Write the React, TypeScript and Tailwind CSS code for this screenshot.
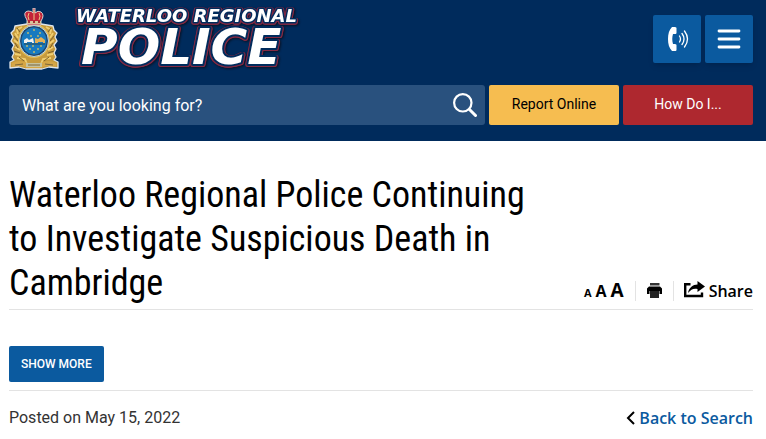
import type { ReactNode } from "react";

const IconButton = ({ label, children }: { label: string; children: ReactNode }) => (
  <button
    type="button"
    aria-label={label}
    className="flex h-12 w-12 items-center justify-center rounded-[2px] bg-[#0b5a9f] text-white shadow-md"
  >
    {children}
  </button>
);

const Crest = () => (
  <svg viewBox="0 0 50 62" className="h-[62px] w-[50px] shrink-0" aria-hidden="true">
    {/* Laurel and scroll */}
    <path
      d="M18 16 12 17 6 18 5 22 2 25 4 29 2 33 5 37 3 41 5 45 3 49 5 52 1 54 1 60 10 59 17 61 33 61 40 59 49 60 49 54 45 52 47 49 45 45 47 41 45 37 48 33 46 29 48 25 45 22 44 18 38 17 32 16Z"
      fill="#c79b3d"
      stroke="#dfe5e9"
      strokeWidth="1.3"
      strokeLinejoin="round"
    />
    <path
      d="M13 19 8 22 9 26M6 25 9 30M5 32 10 36M6 39 11 42M6 46 12 47M8 50 16 51 18 56M37 19 42 22 41 26M44 25 41 30M45 32 40 36M44 39 39 42M44 46 38 47M42 50 34 51 32 56"
      fill="none"
      stroke="#f0cf72"
      strokeWidth="1.8"
    />
    <path
      d="M8 20 11 24M5 28 9 33M6 35 9 40M5 43 11 45M10 49 15 53M42 20 39 24M45 28 41 33M44 35 41 40M45 43 39 45M40 49 35 53"
      fill="none"
      stroke="#7d622d"
      strokeWidth="1"
    />
    <path d="M3 55Q11 51 18 55L32 55Q39 51 47 55L47 59Q39 56 32 60L18 60Q11 56 3 59Z" fill="#d5a646" />
    <path d="M17 55H33V59H17Z" fill="#c6c3a0" />
    <path d="M19 57H31M6 57 14 56M36 56 44 57" stroke="#7b653a" strokeWidth="1" />
    {/* Shield */}
    <ellipse cx="25" cy="33" rx="16" ry="17" fill="#e5bd58" />
    <ellipse cx="25" cy="33" rx="14.5" ry="15.5" fill="#22466c" stroke="#b9d4e2" strokeWidth="1" />
    <ellipse cx="25" cy="33" rx="12.5" ry="13.5" fill="#187ac0" />
    <path
      d="M18 25h2M24 22h2M30 25h2M21 28h2M28 28h2M17 38h2M23 38h2M31 38h2M20 41h2M28 41h2M24 44h2"
      stroke="#b9b96f"
      strokeWidth="1.5"
    />
    <path d="M15 32 18 30 20 32 24 30 25 35H23V34H18V35H15Z" fill="#f1f0ed" />
    <path d="M26 30 29 31 32 29 36 32V35H34V34H29V35H26Z" fill="#e0b058" />
    <path d="M15 36H36" stroke="#284b55" strokeWidth="1" />
    {/* Crown */}
    <path
      d="M18 12Q13 4 19 3Q23 3 24 5L24 0H26V5Q29 2 32 4Q36 7 32 13L32 17H18Z"
      fill="#c32339"
      stroke="#d8d3cf"
    />
    <path d="M20 5Q18 8 20 12M30 5Q32 8 30 12M25 2V12" fill="none" stroke="#edc985" strokeWidth="1" />
    <path d="M18 13H32V16H18Z" fill="#d8c49c" />
    <path d="M19 14H21M24 14H26M29 14H31" stroke="#a33134" strokeWidth="2" />
  </svg>
);

const Logo = () => (
  <a href="#" aria-label="Waterloo Regional Police" className="flex items-start">
    <Crest />
    {/* White face, navy stroke, red edge and a dark shadow */}
    <svg
      viewBox="0 0 270 66"
      className="h-[66px] w-[270px] overflow-visible [filter:drop-shadow(1px_0_0_#842943)_drop-shadow(-1px_0_0_#842943)_drop-shadow(0_1px_0_#842943)_drop-shadow(1px_1px_1px_#071225)]"
      fontFamily="'DejaVu Sans', sans-serif"
      fontWeight="bold"
      fontStyle="italic"
      fill="#fff"
      stroke="#002b5c"
      strokeLinejoin="round"
      paintOrder="stroke"
    >
      <text x="17" y="14" fontSize="18" strokeWidth="3">WATERLOO REGIONAL</text>
      <text x="22" y="56" fontSize="50" strokeWidth="4">POLICE</text>
    </svg>
  </a>
);

const SiteHeader = () => (
  <header className="bg-[#002b5c] pt-2 pr-[13px] pb-4 pl-[9px]">
    <div className="flex items-start justify-between">
      <Logo />
      <div className="flex gap-1 pt-[7px]">
        <IconButton label="Contact us">
          <svg viewBox="0 0 24 24" className="h-6 w-6" fill="none" stroke="currentColor">
            <path
              d="M10 0H7C4 3 3 7 3 12s1 9 4 12h3c1 0 1.500-.5 1.500-1v-5s-.5-1-1.500-1H8C7 14 7 10 8 7h2c1 0 1.500-.5 1.500-1V1S11 0 10 0Z"
              fill="currentColor"
              stroke="none"
            />
            <path d="M14.500 9q2 3 0 6M17 6.500q4 5.500 0 11M19.500 4q6 8 0 16" strokeWidth="1.3" strokeLinecap="round" />
          </svg>
        </IconButton>
        <IconButton label="Menu">
          <svg viewBox="0 0 24 24" className="h-6 w-6" stroke="currentColor" strokeWidth="2.8" strokeLinecap="round">
            <path d="M2 4h20M2 12h20M2 20h20" />
          </svg>
        </IconButton>
      </div>
    </div>
    <div className="mt-[11px] flex gap-1">
      <form role="search" className="flex h-10 min-w-0 flex-1 rounded-[3px] bg-[#29517e]">
        <input
          type="text"
          aria-label="Search"
          placeholder="What are you looking for?"
          className="min-w-0 flex-1 bg-transparent pt-0.5 pl-[13px] text-base text-white outline-none placeholder:text-white"
        />
        <button type="button" aria-label="Submit search" className="w-10 pl-2 text-white">
          <svg viewBox="0 0 24 24" className="h-6 w-6" fill="none" stroke="currentColor" strokeWidth="2.2">
            <circle cx="9.800" cy="9.800" r="8.700" />
            <path d="m16.500 16.500 6 6" strokeWidth="3" strokeLinecap="round" />
          </svg>
        </button>
      </form>
      <button type="button" className="h-10 w-[130px] rounded-[2px] bg-[#f6bd50] pb-0.5 text-sm text-black">
        Report Online
      </button>
      <button type="button" className="h-10 w-[130px] rounded-[2px] bg-[#ae282f] pb-0.5 text-sm text-white">
        How Do I...
      </button>
    </div>
  </header>
);

const PageTools = () => (
  <div className="flex h-7 shrink-0 items-center font-['Open_Sans',sans-serif] font-semibold">
    <div className="flex items-baseline gap-1 pr-[11px] font-bold">
      <button type="button" aria-label="Small text" className="text-[11px] leading-6">A</button>
      <button type="button" aria-label="Medium text" className="text-base leading-6">A</button>
      <button type="button" aria-label="Large text" className="text-[19px] leading-6">A</button>
    </div>
    <button type="button" aria-label="Print" className="border-x border-[#e3e3e3] px-[11px] py-0.5">
      <svg viewBox="0 0 15 16" className="h-4 w-[15px]">
        <path d="M3 0H12.500V2.500H3Z" fill="#333" />
        <path d="M2 3.500H13L15 5.500V11H12.500V8H2.500V11H0V5.500Z" fill="#000" />
        <path d="M3 8H12V15H3Z" fill="#222" />
      </svg>
    </button>
    <a href="#" className="flex items-center gap-1 pl-2.5 text-base">
      <svg viewBox="0 0 21 17" className="mb-1 h-[17px] w-[21px]">
        <path d="M6.500 3.200H1.200V15H18V11.500" fill="none" stroke="currentColor" strokeWidth="2.400" />
        <path d="M13.500 0 21 5.500 13.500 11V8C9.500 7 7 8.500 4 12C5 6.500 9 3.500 13.500 3.500Z" fill="currentColor" />
      </svg>
      Share
    </a>
  </div>
);

const App = () => (
  <div className="min-h-screen bg-white font-[Roboto,sans-serif] text-black">
    <SiteHeader />
    <main className="pt-8 pr-[13px] pl-[9px]">
      <div className="flex items-end justify-between border-b border-[#e3e3e3] pb-1">
        <h1 className="max-w-[540px] font-['Roboto_Condensed',Roboto,sans-serif] text-4xl leading-[44px]">
          Waterloo Regional Police Continuing to Investigate Suspicious Death in Cambridge
        </h1>
        <PageTools />
      </div>
      <div className="border-b border-[#e3e3e3] pt-9 pb-2">
        <button type="button" className="h-9 rounded-[2px] bg-[#0b5a9f] px-3 text-xs font-medium text-white">
          SHOW MORE
        </button>
      </div>
      <div className="flex items-center justify-between pt-[15px]">
        <p className="text-base text-[#333]">Posted on May 15, 2022</p>
        <a
          href="#"
          className="flex items-center gap-1 font-['Open_Sans',sans-serif] text-base font-semibold text-[#0b5a9f]"
        >
          <svg viewBox="0 0 9 14" className="h-3.5 w-[9px]" fill="none" stroke="#000" strokeWidth="2">
            <path d="M8 1 2 7l6 6" />
          </svg>
          Back to Search
        </a>
      </div>
    </main>
  </div>
);

export default App;
